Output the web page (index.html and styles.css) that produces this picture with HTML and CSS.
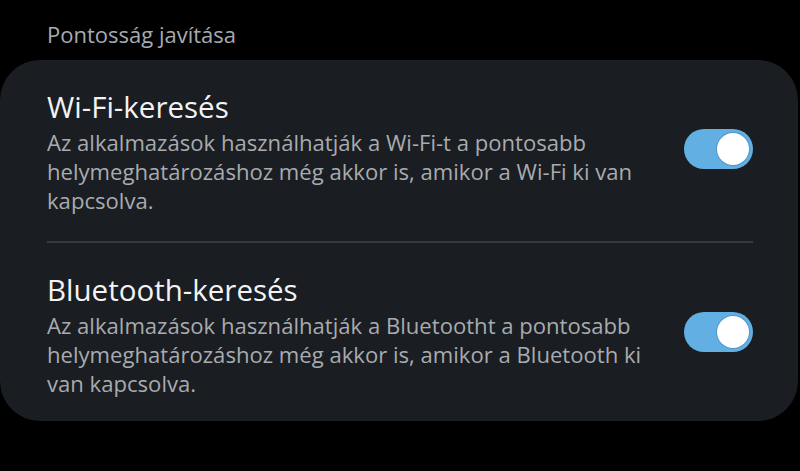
FILE: index.html
```html
<!DOCTYPE html>
<html lang="hu">
<head>
  <meta charset="UTF-8">
  <title>Pontosság javítása</title>
  <link rel="stylesheet" href="styles.css">
</head>
<body>
  <div class="screen">
    <h3 class="section-title">Pontosság javítása</h3>
    <div class="card">
      <div class="row">
        <div class="row-text">
          <div class="row-title">Wi-Fi-keresés</div>
          <div class="row-desc">Az alkalmazások használhatják a Wi-Fi-t a pontosabb helymeghatározáshoz még akkor is, amikor a Wi-Fi ki van kapcsolva.</div>
        </div>
        <div class="switch on"><span class="knob"></span></div>
      </div>
      <div class="divider"></div>
      <div class="row">
        <div class="row-text">
          <div class="row-title">Bluetooth-keresés</div>
          <div class="row-desc">Az alkalmazások használhatják a Bluetootht a pontosabb helymeghatározáshoz még akkor is, amikor a Bluetooth ki van kapcsolva.</div>
        </div>
        <div class="switch on"><span class="knob"></span></div>
      </div>
    </div>
  </div>
</body>
</html>
```

FILE: styles.css
```css
html, body {
  margin: 0;
  background: #000;
}
body {
  font-family: "Open Sans", "Noto Sans", sans-serif;
  color: #f2f2f2;
}
.screen {
  width: 800px;
  height: 471px;
  overflow: hidden;
}
.section-title {
  margin: 0;
  padding: 19px 0 0 47px;
  height: 60px;
  box-sizing: border-box;
  font-size: 22px;
  font-weight: 400;
  color: #a5abb1;
  line-height: 30px;
}
.card {
  margin: 0 2px 0 0;
  background: #1a1d21;
  border-radius: 40px;
  padding: 0 45px 0 47px;
  height: 361px;
  box-sizing: border-box;
}
.row {
  display: flex;
  align-items: center;
  justify-content: space-between;
  padding: 29px 0 26px;
}
.row-text {
  width: 634px;
}
.row-title {
  font-size: 29.5px;
  line-height: 36px;
  color: #f3f3f3;
  margin-bottom: 3px;
}
.row-desc {
  font-size: 22.1px;
  line-height: 29px;
  color: #a8abaf;
}
.divider {
  height: 2px;
  background: #36393d;
}
.switch {
  width: 69px;
  height: 40px;
  border-radius: 20px;
  background: #62afe3;
  position: relative;
  flex-shrink: 0;
  margin-bottom: 6px;
}
.knob {
  position: absolute;
  top: 4px;
  right: 4px;
  width: 32px;
  height: 32px;
  border-radius: 50%;
  background: #fff;
  box-shadow: 0 0 0 1px #4f98cc;
}
```
